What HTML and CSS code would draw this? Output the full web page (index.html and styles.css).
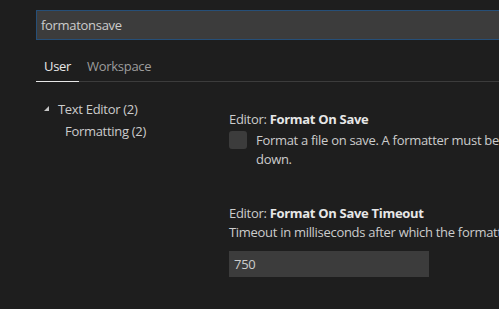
FILE: index.html
```html
<!DOCTYPE html>
<html lang="en">
<head>
    <meta charset="UTF-8">
    <title>Settings</title>
    <link rel="stylesheet" href="styles.css">
</head>
<body>
    <div class="search-box">formatonsave</div>
    <div class="tabs">
        <div class="tab active">User</div>
        <div class="tab">Workspace</div>
    </div>
    <div class="main">
        <div class="tree">
            <div class="tree-item"><span class="twisty"></span>Text Editor (2)</div>
            <div class="tree-item child">Formatting (2)</div>
        </div>
        <div class="settings">
            <div class="setting">
                <div class="setting-title">Editor: <b>Format On Save</b></div>
                <div class="setting-row">
                    <div class="checkbox"></div>
                    <div class="setting-desc">Format a file on save. A formatter must be available, the file must not be saved after delay, and the editor must not be shutting<br>down.</div>
                </div>
            </div>
            <div class="setting">
                <div class="setting-title">Editor: <b>Format On Save Timeout</b></div>
                <div class="setting-desc">Timeout in milliseconds after which the formatters on save are cancelled.</div>
                <div class="number-input">750</div>
            </div>
        </div>
    </div>
</body>
</html>
```

FILE: styles.css
```css
body {
    margin: 0;
    padding: 10px 0 0 36px;
    height: 299px;
    overflow: hidden;
    background-color: #1e1e1e;
    color: #cccccc;
    font-family: "Open Sans", sans-serif;
    font-size: 13px;
    letter-spacing: -0.3px;
}
.search-box {
    height: 28px;
    width: 600px;
    box-sizing: content-box;
    border: 1px solid #264f78;
    background-color: #3c3c3c;
    color: #cccccc;
    font-size: 13px;
    letter-spacing: -0.3px;
    line-height: 28px;
    padding-left: 4px;
}
.tabs {
    display: flex;
    margin-top: 13px;
    border-bottom: 1px solid #3c3c3c;
    width: 700px;
}
.tab {
    padding: 0 8px;
    height: 28px;
    line-height: 27px;
    color: #9d9d9d;
    margin-bottom: -1px;
    border-bottom: 1px solid transparent;
}
.tab.active {
    color: #e7e7e7;
    border-bottom-color: #e7e7e7;
}
.main {
    display: flex;
    margin-top: 15px;
}
.tree {
    width: 193px;
    flex-shrink: 0;
    padding-top: 1px;
}
.tree-item {
    height: 22px;
    line-height: 22px;
    padding-left: 22px;
    position: relative;
    white-space: nowrap;
}
.tree-item.child {
    padding-left: 29px;
}
.twisty {
    position: absolute;
    left: 8px;
    top: 8px;
    width: 0;
    height: 0;
    border-left: 5px solid transparent;
    border-bottom: 5px solid #c5c5c5;
}
.settings {
    flex: 1;
    white-space: nowrap;
    padding-top: 12px;
}
.setting {
    margin-bottom: 34px;
}
.setting-title {
    color: #cccccc;
    line-height: 20px;
}
.setting-title b {
    color: #e7e7e7;
    font-weight: 700;
}
.setting-row {
    display: flex;
    margin-top: 2px;
}
.checkbox {
    width: 18px;
    height: 18px;
    background-color: #3c3c3c;
    border-radius: 3px;
    margin-right: 9px;
    flex-shrink: 0;
}
.setting-desc {
    line-height: 19px;
    color: #cccccc;
}
.number-input {
    margin-top: 9px;
    width: 195px;
    height: 26px;
    line-height: 26px;
    padding-left: 5px;
    background-color: #3c3c3c;
    color: #cccccc;
}
```
